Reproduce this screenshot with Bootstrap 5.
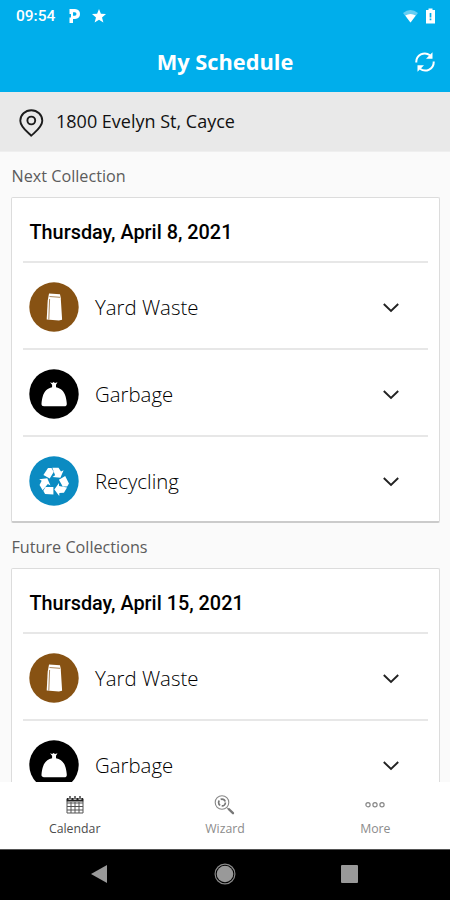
<!DOCTYPE html>
<html lang="en">
<head>
<meta charset="utf-8">
<meta name="viewport" content="width=device-width, initial-scale=1">
<title>My Schedule</title>
<link href="https://cdn.jsdelivr.net/npm/bootstrap@5.3.0/dist/css/bootstrap.min.css" rel="stylesheet">
<style>
body{font-family:"Open Sans","Noto Sans",sans-serif;background:#fafafa;color:#111}
svg{display:block;flex:none}
.screen{height:900px}
.top-area{background:#00aeeb;height:92px}
.status-row{height:32px;padding:0 15px 0 16px;font:500 15.5px/32px Roboto,sans-serif}
.status-park{margin-left:14px}
.status-star{margin-left:12px}
.status-battery{margin-left:8px}
.title-row{height:60px;display:grid;grid-template-columns:1fr auto 1fr;padding:0 15px}
.title-row h1{font-size:21.800px;font-weight:700;line-height:60px;margin:0 0 0 0}
.address{height:60px;background:#e9e9e9;border-bottom:1px solid #efefef;padding:0 19px;font-size:18px}
.address svg{margin-top:2px}
.address span{margin:-1px 0 0 12px}
.list-wrap{padding:0 10px 0 12px}
.section-label{font-size:16.200px;line-height:22px;height:45px;padding-top:13px;color:#5c5c5c;margin:0 0 0 -.5px;font-weight:400}
.pickup{border:1px solid #dcdcdc;border-bottom:2px solid #cbcbcb;border-radius:2px;padding:0 11px;height:326px;margin-left:-1px}
.pickup h3{font:500 19.850px/69px Roboto,sans-serif;height:63px;margin:0;padding-left:6.500px;color:#000}
.pickup-row{height:87px;border-top:2px solid #e7e7e7;padding:2px 28px 0 6px}
.pickup-row span{font-size:20.400px;font-weight:300;margin:1px 0 0 16px;color:#000}
.pickup-row .toggle{margin-top:2px}
.tabs{height:67px;font-size:12.300px;color:#8c8c8c}
.tabs a{color:inherit;padding:13px 0 0 1px;flex:1}
.tabs a.active{color:#4c4c4c;padding-left:0}
.tabs span{line-height:18px;margin-top:5px}
.system-nav{height:51px;background:#000;border-top:1px solid #555;padding:0 1px 2px 0}
.nav-home{margin:0 105px 0 107px}
</style>
<script src="https://cdn.jsdelivr.net/npm/bootstrap@5.3.0/dist/js/bootstrap.bundle.min.js"></script>
</head>
<body>
<svg width="0" height="0" class="position-absolute" aria-hidden="true">
<defs>
<symbol id="bag" viewBox="0 0 50 50"><circle cx="25" cy="25" r="24.700" fill="#875213"/><path d="M20 11.500l11 .8.800 4 1.300 21.500-3.200.8-12.200-1 1-19z" fill="#fff"/><path d="M20.500 14.500l10.500.8M20.600 17l-.8 20.500" stroke="#875213" stroke-width=".7" fill="none"/></symbol>
<symbol id="sack" viewBox="0 0 50 50"><circle cx="25" cy="25" r="24.700" fill="#000"/><path d="M21 13.200l2.200.8 1.300-1 1.500 1 2.500-.8-1.500 2.500v2.500c5 1.100 8.200 4.200 9.500 9 .6 2.200 1.200 5.100 1.300 7.700 0 1.600-1 2.300-2.400 2.300H15c-1.600 0-2.700-.8-2.500-2.500.1-2.500.6-5.300 1.300-7.500 1.400-4.800 4.400-7.900 9.300-9v-2.500z" fill="#fff"/></symbol>
<symbol id="recycle" viewBox="0 0 50 50"><circle cx="25" cy="25" r="24.700" fill="#0b8bc2"/>
<g fill="#fff"><path id="arrow" d="M19 12l-4.600 7 6.300 3.600 4-6.700-2.200-3.900zM23.300 11.700h6.200l2.500 3.900 2.600-1.400-3.200 7.500-7.900-.8 2.600-1.600z"/><use href="#arrow" transform="rotate(120 25 25.800)"/><use href="#arrow" transform="rotate(240 25 25.800)"/></g></symbol>
<symbol id="chevron" viewBox="0 0 18 12"><path d="M1.800 2L9 9l7.200-7" fill="none" stroke="#222" stroke-width="1.900"/></symbol>
</defs>
</svg>
<div class="screen d-flex flex-column overflow-hidden">
<header class="top-area text-white flex-shrink-0">
<div class="status-row d-flex align-items-center">
<span>09:54</span>
<svg class="status-park" width="11" height="14" viewBox="0 0 11 14"><path d="M.5 0H6Q11 .3 11 5T6 10H4V14H.500V8.500H2V5H.500z" fill="#fff"/><path d="M4 3.200H5.800Q7.500 3.400 7.500 5T5.800 6.800H4z" fill="#00aeeb"/></svg>
<svg class="status-star" width="14" height="14" viewBox="0 0 14 14"><path d="M7 0l1.900 4.800 5.100.3-4 3.300 1.400 5.100L7 10.700l-4.400 2.800L4 8.400 0 5.100l5.100-.3z" fill="#fff"/></svg>
<svg class="ms-auto" width="15" height="13" viewBox="0 0 15 13"><path d="M0 3Q7.500-3 15 3L7.500 12.500z" fill="#fff" opacity=".4"/><path d="M2.300 5.500Q7.500 2.300 12.700 5.500L7.500 12.500z" fill="#fff"/></svg>
<svg class="status-battery" width="9" height="16" viewBox="0 0 9 16"><path d="M0 2h2.500V.5h4V2H9v13.500H0z" fill="#fff"/><path d="M4.500 5v4.500M4.500 10.500v1.800" stroke="#00aeeb" stroke-width="1.700"/></svg>
</div>
<div class="title-row align-items-center">
<span></span><h1>My Schedule</h1>
<svg class="ms-auto" width="20" height="20" viewBox="0 0 20 20"><path d="M1.300 10.500A8.500 8.500 0 0 1 15 3.300M18.700 9.500A8.500 8.500 0 0 1 5 16.700" fill="none" stroke="#fff" stroke-width="2"/><path d="M17.500.3v6.500h-6.500zM2.500 19.700v-6.500H9z" fill="#fff"/></svg>
</div>
</header>
<div class="address d-flex align-items-center flex-shrink-0">
<svg width="25" height="28" viewBox="0 0 25 28"><path d="M12.300 26.700C8.500 23 1.300 18 1.300 11.700a11 10.500 0 0 1 22 0C23.300 18 16 23 12.300 26.700z" fill="none" stroke="#1c1c1c" stroke-width="1.900" stroke-linejoin="round"/><circle cx="12.300" cy="11.500" r="3.900" fill="none" stroke="#1c1c1c" stroke-width="1.900"/></svg>
<span>1800 Evelyn St, Cayce</span>
</div>
<main class="list-wrap flex-grow-1 overflow-hidden">
<h2 class="section-label">Next Collection</h2>
<section class="pickup bg-white">
<h3>Thursday, April 8, 2021</h3>
<div class="pickup-row d-flex align-items-center"><svg width="50" height="50"><use href="#bag"/></svg><span>Yard Waste</span><svg class="toggle ms-auto" width="18" height="12"><use href="#chevron"/></svg></div>
<div class="pickup-row d-flex align-items-center"><svg width="50" height="50"><use href="#sack"/></svg><span>Garbage</span><svg class="toggle ms-auto" width="18" height="12"><use href="#chevron"/></svg></div>
<div class="pickup-row d-flex align-items-center"><svg width="50" height="50"><use href="#recycle"/></svg><span>Recycling</span><svg class="toggle ms-auto" width="18" height="12"><use href="#chevron"/></svg></div>
</section>
<h2 class="section-label">Future Collections</h2>
<section class="pickup bg-white">
<h3>Thursday, April 15, 2021</h3>
<div class="pickup-row d-flex align-items-center"><svg width="50" height="50"><use href="#bag"/></svg><span>Yard Waste</span><svg class="toggle ms-auto" width="18" height="12"><use href="#chevron"/></svg></div>
<div class="pickup-row d-flex align-items-center"><svg width="50" height="50"><use href="#sack"/></svg><span>Garbage</span><svg class="toggle ms-auto" width="18" height="12"><use href="#chevron"/></svg></div>
</section>
</main>
<nav class="tabs bg-white d-flex flex-shrink-0">
<a class="active d-flex flex-column align-items-center text-decoration-none"><svg width="18" height="20" viewBox="0 0 18 20"><path d="M1 4h16v14H1zM1 8h16M1 11.500h16M1 15h16M5 7v11M9 7v11M13 7v11" fill="none" stroke="#555" stroke-width="1"/><path d="M.8 3h16.400v3.500H.8z" fill="#222"/><path d="M4 1v4M9 1v4M14 1v4" stroke="#fff" stroke-width="2.600"/><path d="M4 1v3.500M9 1v3.500M14 1v3.500" stroke="#222" stroke-width="1.300"/></svg><span>Calendar</span></a>
<a class="d-flex flex-column align-items-center text-decoration-none"><svg width="21" height="20" viewBox="0 0 21 20"><circle cx="8" cy="7.500" r="6.800" fill="none" stroke="#888" stroke-width="1.100"/><circle cx="8" cy="7.500" r="3.400" fill="none" stroke="#777" stroke-width="1.700" stroke-dasharray="5.500 1.600"/><path d="M12.500 12.300l2 2" stroke="#888"/><path d="M14.800 14.200l4.200 4" stroke="#777" stroke-width="2.300" stroke-linecap="round"/></svg><span>Wizard</span></a>
<a class="d-flex flex-column align-items-center text-decoration-none"><svg width="20" height="20" viewBox="0 0 20 20"><g fill="none" stroke="#888" stroke-width="1.200"><circle cx="3" cy="9.700" r="2.100"/><circle cx="10" cy="9.700" r="2.100"/><circle cx="17" cy="9.700" r="2.100"/></g></svg><span>More</span></a>
</nav>
<footer class="system-nav d-flex flex-shrink-0 justify-content-center align-items-center">
<svg width="16" height="18" viewBox="0 0 16 18"><path d="M0 9L16 0v18z" fill="#999"/></svg>
<svg class="nav-home" width="22" height="22" viewBox="0 0 22 22"><circle cx="11" cy="11" r="8.300" fill="#999"/><circle cx="11" cy="11" r="9.900" fill="none" stroke="#888" stroke-width="1.200"/></svg>
<svg width="17" height="18" viewBox="0 0 17 18"><rect width="17" height="18" rx="1" fill="#999"/></svg>
</footer>
</div>
</body>
</html>
